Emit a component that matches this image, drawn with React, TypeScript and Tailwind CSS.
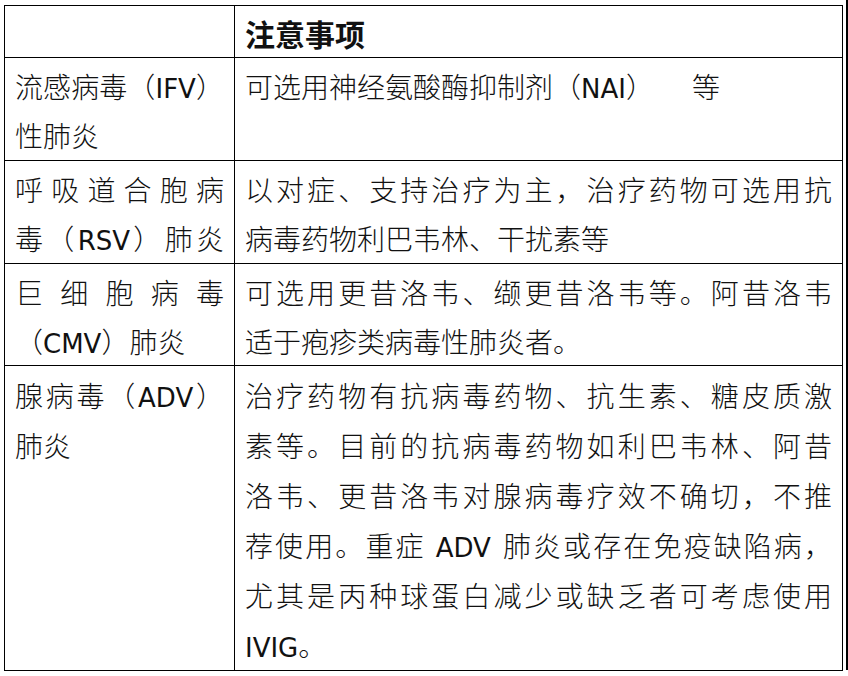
const rows: { name: string[]; note: string[]; h: string; lead: string }[] = [
  {
    name: ["流感病毒（IFV）", "性肺炎"],
    note: ["可选用神经氨酸酶抑制剂（NAI）~等"],
    h: "h-[102px]",
    lead: "leading-[49px] pt-[4px]",
  },
  {
    name: ["呼吸道合胞病", "毒（RSV）肺炎"],
    note: ["以对症、支持治疗为主，治疗药物可选用抗", "病毒药物利巴韦林、干扰素等"],
    h: "h-[103px]",
    lead: "leading-[49px] pt-[4px]",
  },
  {
    name: ["巨细胞病毒", "（CMV）肺炎"],
    note: ["可选用更昔洛韦、缬更昔洛韦等。阿昔洛韦", "适于疱疹类病毒性肺炎者。"],
    h: "h-[101px]",
    lead: "leading-[48.5px] pt-[4px]",
  },
  {
    name: ["腺病毒（ADV）", "肺炎"],
    note: [
      "治疗药物有抗病毒药物、抗生素、糖皮质激",
      "素等。目前的抗病毒药物如利巴韦林、阿昔",
      "洛韦、更昔洛韦对腺病毒疗效不确切，不推",
      "荐使用。重症 ADV 肺炎或存在免疫缺陷病，",
      "尤其是丙种球蛋白减少或缺乏者可考虑使用",
      "IVIG。",
    ],
    h: "h-[304px]",
    lead: "leading-[50px] pt-[4px]",
  },
];

// 英文缩写用更宽的字体；" " 为窄空，"~" 为宽空
function Mixed({ text }: { text: string }) {
  return (
    <>
      {text.split(/([A-Za-z]+| |~)/).map((part, i) => {
        if (/^[A-Za-z]+$/.test(part))
          return (
            <span key={i} className="font-['DejaVu_Sans',sans-serif] font-normal text-[26px] leading-none">
              {part}
            </span>
          );
        if (part === " ") return <span key={i} className="inline-block w-[10px]" />;
        if (part === "~") return <span key={i} className="inline-block w-[38px]" />;
        return part;
      })}
    </>
  );
}

// 多行单元格：除最后一行外两端对齐
function Lines({ lines, stretchLast }: { lines: string[]; stretchLast?: boolean }) {
  return (
    <>
      {lines.map((line, i) => {
        const justify = i < lines.length - 1 || stretchLast;
        return (
          <div
            key={i}
            className={justify ? "whitespace-nowrap text-justify [text-align-last:justify]" : "whitespace-nowrap"}
          >
            <Mixed text={line} />
          </div>
        );
      })}
    </>
  );
}

export default function App() {
  return (
    <div
      lang="zh-CN"
      className="flex w-[848px] h-[676px] bg-white text-[#111] font-['Noto_Sans_CJK_SC','Noto_Sans_CJK_JP',sans-serif]"
    >
      <div className="pl-[4px] pt-[5px]">
        <table className="table-fixed border-collapse w-[838px] text-[28px] font-light">
          <colgroup>
            <col className="w-[230px]" />
            <col className="w-[608px]" />
          </colgroup>
          <tbody>
            <tr className="h-[52px]">
              <td className="border border-black" />
              <td className="border border-black align-top px-[10px] pt-[4px] leading-[46px] font-bold text-[30px]">
                注意事项
              </td>
            </tr>
            {rows.map((r, i) => (
              <tr key={i} className={r.h}>
                <td className={`border border-black align-top px-[10px] ${r.lead}`}>
                  <Lines lines={r.name} stretchLast={i === 1} />
                </td>
                <td className={`border border-black align-top px-[10px] ${r.lead}`}>
                  <Lines lines={r.note} />
                </td>
              </tr>
            ))}
          </tbody>
        </table>
      </div>
      <div className="ml-[3px] w-[3px] h-[670px] bg-black" />
    </div>
  );
}
